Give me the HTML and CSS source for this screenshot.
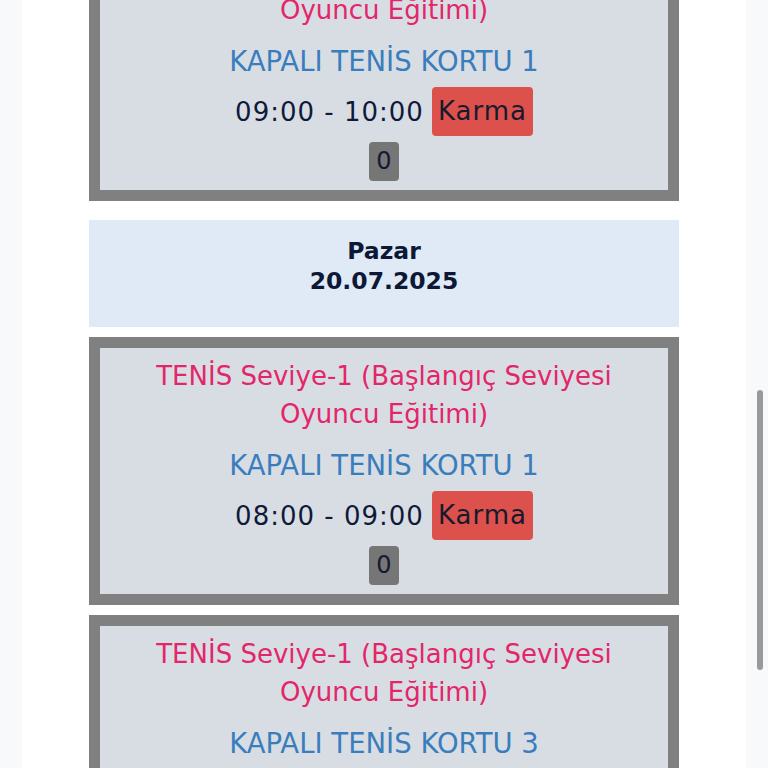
FILE: index.html
```html
<!DOCTYPE html>
<html lang="tr">
<head>
<meta charset="utf-8">
<title>Program</title>
<link rel="stylesheet" href="styles.css">
</head>
<body>
<div class="page">
  <div class="list">
    <div class="card card-first">
      <div class="title">TENİS Seviye-1 (Başlangıç Seviyesi Oyuncu Eğitimi)</div>
      <div class="court">KAPALI TENİS KORTU 1</div>
      <div class="time-row"><span class="time">09:00 - 10:00</span><span class="badge-karma">Karma</span></div>
      <div class="count-row"><span class="badge-count">0</span></div>
    </div>

    <div class="day">
      <div class="day-name">Pazar</div>
      <div class="day-date">20.07.2025</div>
    </div>

    <div class="card">
      <div class="title">TENİS Seviye-1 (Başlangıç Seviyesi Oyuncu Eğitimi)</div>
      <div class="court">KAPALI TENİS KORTU 1</div>
      <div class="time-row"><span class="time">08:00 - 09:00</span><span class="badge-karma">Karma</span></div>
      <div class="count-row"><span class="badge-count">0</span></div>
    </div>

    <div class="card">
      <div class="title">TENİS Seviye-1 (Başlangıç Seviyesi Oyuncu Eğitimi)</div>
      <div class="court">KAPALI TENİS KORTU 3</div>
      <div class="time-row"><span class="time">10:00 - 11:00</span><span class="badge-karma">Karma</span></div>
      <div class="count-row"><span class="badge-count">0</span></div>
    </div>
  </div>
</div>
<div class="scrollbar"><div class="thumb"></div></div>
</body>
</html>
```

FILE: styles.css
```css
html, body {
  margin: 0;
  padding: 0;
  height: 768px;
  overflow: hidden;
  background: #f8f9fa;
  font-family: "DejaVu Sans", "Open Sans", sans-serif;
}

.page {
  width: 724px;
  margin-left: 22px;
  background: #ffffff;
  min-height: 768px;
  padding: 0 67px;
  box-sizing: border-box;
}

.list {
  display: flex;
  flex-direction: column;
}

.card {
  background: #d8dde3;
  border: 11px solid #808080;
  padding: 9px 10px 9px;
  margin-bottom: 10px;
  display: flex;
  flex-direction: column;
  align-items: center;
  text-align: center;
}

.card-first {
  margin-top: -67px;
}

.title {
  color: #e3266a;
  font-size: 26px;
  line-height: 38px;
  width: 480px;
}

.court {
  color: #3a7dbd;
  font-size: 27.5px;
  line-height: 38px;
  margin-top: 13px;
}

.time-row {
  display: flex;
  align-items: center;
  gap: 8px;
  margin-top: 7px;
}

.time {
  color: #0f1a3a;
  font-size: 26px;
  letter-spacing: 1px;
}

.badge-karma {
  background: #dc514c;
  color: #171a2e;
  font-size: 26px;
  letter-spacing: 1px;
  line-height: 31px;
  padding: 9px 6px;
  border-radius: 4px;
}

.count-row {
  margin-top: 6px;
  display: flex;
}

.badge-count {
  background: #767676;
  color: #151a33;
  font-size: 24px;
  line-height: 31px;
  padding: 4px 7px;
  border-radius: 4px;
}

.day {
  background: #dfeaf6;
  margin: 9px 0 10px;
  height: 107px;
  box-sizing: border-box;
  padding-top: 16px;
  text-align: center;
  color: #0d1836;
  font-weight: 700;
  font-size: 23.5px;
  line-height: 30px;
}

.scrollbar {
  position: fixed;
  right: 5px;
  top: 390px;
  width: 6px;
  height: 280px;
}

.thumb {
  width: 100%;
  height: 100%;
  background: #9a9a9a;
  border-radius: 3px;
}
```
